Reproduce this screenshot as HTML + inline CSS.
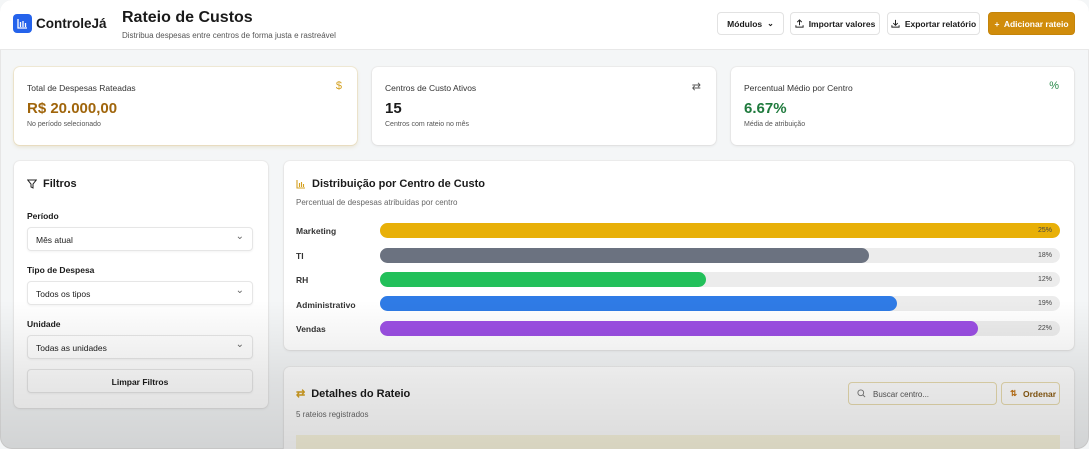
<!DOCTYPE html>
<html><head><meta charset="utf-8"><style>
*{box-sizing:border-box;margin:0;padding:0}
body{width:1089px;height:449px;overflow:hidden;font-family:"Liberation Sans",sans-serif;background:#f4f6f7;position:relative;color:#1a1a1a}
.frame{position:absolute;inset:0;border-radius:12px;overflow:hidden;background:#f4f6f7;box-shadow:inset 0 0 0 1px #e6e6e6}
.hdr{position:absolute;left:0;top:0;width:1089px;height:50px;background:#fff;border-bottom:1px solid #e8e8e8}
.logo{position:absolute;left:13px;top:14px;width:19px;height:19px;border-radius:4px;background:#2563eb}
.brand{position:absolute;left:36px;top:16px;font-size:13.5px;font-weight:bold}
.title{position:absolute;left:122px;top:9px;font-size:16px;font-weight:bold}
.sub{position:absolute;left:122px;top:31px;font-size:8px;color:#555}
.btn{position:absolute;top:12px;height:23px;border:1px solid #e2e2e2;border-radius:4px;background:#fff;font-size:8.5px;font-weight:bold;display:flex;align-items:center;justify-content:center;gap:5px}
.card{position:absolute;background:#fff;border-radius:6px;box-shadow:0 1px 3px rgba(0,0,0,.08),0 0 0 1px #eee}
.kl{position:absolute;left:13px;top:16px;font-size:8.5px;color:#333}
.kv{position:absolute;left:13px;top:33px;font-size:15px;font-weight:bold}
.ks{position:absolute;left:13px;top:54px;font-size:7px;color:#555}
.ki{position:absolute;right:15px;top:13px;font-size:11px}
.flab{position:absolute;left:13px;font-size:8.5px;font-weight:bold}
.sel{position:absolute;left:13px;width:226px;height:24px;border:1px solid #e6e6e6;border-radius:4px;background:#fff;font-size:8.5px;padding:7px 8px;box-shadow:0 1px 2px rgba(0,0,0,.05)}
.sel.dd::after{content:"⌄";position:absolute;right:8px;top:3px;font-size:10px;color:#666}
.bl{position:absolute;left:12px;font-size:8.5px;font-weight:bold;color:#333}
.tr{position:absolute;left:96px;width:680px;height:15px;border-radius:8px;background:#ececec}
.fi{position:absolute;left:0;top:0;height:15px;border-radius:8px}
.pc{position:absolute;right:8px;top:0;line-height:15px;font-size:7px;color:#444}
.fade{position:absolute;left:0;top:0;width:1089px;height:449px;background:linear-gradient(to bottom,rgba(0,0,0,0) 0,rgba(0,0,0,0) 300px,rgba(0,0,0,.09) 380px,rgba(0,0,0,.14) 449px);pointer-events:none}
</style></head><body><div class="frame">
<div class="hdr">
<div class="logo"><svg width="19" height="19" viewBox="0 0 19 19"><path d="M5 5v9h9M7.5 8v5M10 7v6M12.5 9v4" stroke="#fff" stroke-width="1.3" fill="none"/></svg></div>
<div class="brand">ControleJá</div>
<div class="title">Rateio de Custos</div>
<div class="sub">Distribua despesas entre centros de forma justa e rastreável</div>
<div class="btn" style="left:717px;width:67px">Módulos <span style="font-size:8px">⌄</span></div>
<div class="btn" style="left:790px;width:90px"><svg width="9" height="9" viewBox="0 0 10 10"><path d="M5 7V1M2.5 3.5 5 1l2.5 2.5M1 7v2h8V7" stroke="#222" fill="none" stroke-width="1.1"/></svg>Importar valores</div>
<div class="btn" style="left:887px;width:93px"><svg width="9" height="9" viewBox="0 0 10 10"><path d="M5 1v6M2.5 4.5 5 7l2.5-2.5M1 7v2h8V7" stroke="#222" fill="none" stroke-width="1.1"/></svg>Exportar relatório</div>
<div class="btn" style="left:988px;width:87px;background:#d08c0b;border-color:#c4840a;color:#fff">+&nbsp; Adicionar rateio</div>
</div>

<div class="card" style="left:14px;top:67px;width:343px;height:78px;box-shadow:0 2px 4px rgba(180,140,40,.18),0 0 0 1px #f0ead8"><div class="kl">Total de Despesas Rateadas</div><div class="ki" style="color:#d4a020">$</div><div class="kv" style="color:#a0650b">R$ 20.000,00</div><div class="ks">No período selecionado</div></div>
<div class="card" style="left:372px;top:67px;width:344px;height:78px"><div class="kl">Centros de Custo Ativos</div><div class="ki" style="color:#555">⇄</div><div class="kv">15</div><div class="ks">Centros com rateio no mês</div></div>
<div class="card" style="left:731px;top:67px;width:343px;height:78px"><div class="kl">Percentual Médio por Centro</div><div class="ki" style="color:#2a8a4a">%</div><div class="kv" style="color:#1f7a3d">6.67%</div><div class="ks">Média de atribuição</div></div>

<div class="card" style="left:14px;top:161px;width:254px;height:247px">
<div style="position:absolute;left:13px;top:17px;font-size:11px;font-weight:bold;display:flex;gap:6px;align-items:center"><svg width="10" height="10" viewBox="0 0 10 10"><path d="M.7 1h8.6L6 5v4L4 8V5z" stroke="#222" fill="none" stroke-width="1"/></svg>Filtros</div>
<div class="flab" style="top:50px">Período</div><div class="sel dd" style="top:66px">Mês atual</div>
<div class="flab" style="top:104px">Tipo de Despesa</div><div class="sel dd" style="top:120px">Todos os tipos</div>
<div class="flab" style="top:158px">Unidade</div><div class="sel dd" style="top:174px">Todas as unidades</div>
<div class="sel" style="top:208px;text-align:center;font-weight:bold;padding-top:7px;height:24px">Limpar Filtros</div>
</div>

<div class="card" style="left:284px;top:161px;width:790px;height:189px">
<div style="position:absolute;left:12px;top:17px;font-size:11px;font-weight:bold;display:flex;gap:6px;align-items:center"><svg width="10" height="10" viewBox="0 0 10 10"><path d="M1 1v8h8M3.5 4v4M5.5 3v5M7.5 5v3" stroke="#d4a020" fill="none" stroke-width="1.1"/></svg>Distribuição por Centro de Custo</div>
<div style="position:absolute;left:12px;top:37px;font-size:8px;color:#666">Percentual de despesas atribuídas por centro</div>
<div class="bl" style="top:65px">Marketing</div><div class="tr" style="top:62px"><div class="fi" style="width:680px;background:#e8b008"></div><div class="pc">25%</div></div>
<div class="bl" style="top:90px">TI</div><div class="tr" style="top:87px"><div class="fi" style="width:489px;background:#6b7280"></div><div class="pc">18%</div></div>
<div class="bl" style="top:114px">RH</div><div class="tr" style="top:111px"><div class="fi" style="width:326px;background:#22c05a"></div><div class="pc">12%</div></div>
<div class="bl" style="top:139px">Administrativo</div><div class="tr" style="top:135px"><div class="fi" style="width:517px;background:#2f7be6"></div><div class="pc">19%</div></div>
<div class="bl" style="top:163px">Vendas</div><div class="tr" style="top:160px"><div class="fi" style="width:598px;background:#9b4fe3"></div><div class="pc">22%</div></div>
</div>

<div class="card" style="left:284px;top:367px;width:790px;height:82px;border-radius:6px 6px 0 0">
<div style="position:absolute;left:12px;top:20px;font-size:11px;font-weight:bold;display:flex;gap:6px;align-items:center"><span style="color:#d4a020">⇄</span>Detalhes do Rateio</div>
<div style="position:absolute;left:12px;top:43px;font-size:8px;color:#666">5 rateios registrados</div>
<div style="position:absolute;left:564px;top:15px;width:149px;height:23px;border:1px solid #e8dcb0;border-radius:4px;background:#fff;font-size:8px;color:#555;padding:7px 0 0 24px"><svg style="position:absolute;left:8px;top:6px" width="9" height="9" viewBox="0 0 10 10"><circle cx="4.2" cy="4.2" r="3.2" stroke="#777" fill="none"/><path d="M6.6 6.6 9 9" stroke="#777"/></svg>Buscar centro...</div>
<div style="position:absolute;left:717px;top:15px;width:59px;height:23px;border:1px solid #e8dcb0;border-radius:4px;background:#fff;font-size:8.5px;font-weight:bold;color:#8a5a10;padding:6px 0 0 21px"><span style="position:absolute;left:8px;top:5px;color:#c07010">⇅</span>Ordenar</div>
<div style="position:absolute;left:12px;top:68px;width:764px;height:14px;background:#faf6df"></div>
</div>
<div class="fade"></div>
</div></body></html>
